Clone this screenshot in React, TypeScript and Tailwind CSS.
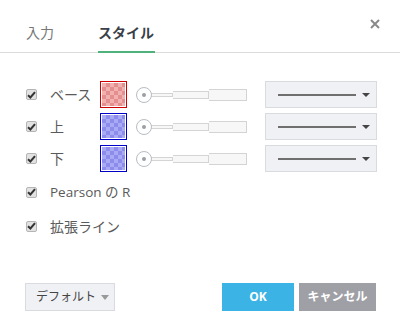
import { useState } from "react";

const font = { fontFamily: '"Open Sans", "Noto Sans CJK JP", sans-serif' };

function Check() {
    return (
        <span className="flex items-center justify-center w-[11px] h-[11px] bg-[#e2e2e2] border border-[#b5b5b5] rounded-[2px]">
            <svg width="9" height="8" viewBox="0 0 9 8">
                <path d="M1 4.2 L3.4 6.5 L8 1.2" stroke="#333" strokeWidth="2" fill="none" />
            </svg>
        </span>
    );
}

function Swatch({ color }: { color: "red" | "blue" }) {
    return color == "red" ? (
        <div className="w-[27px] h-[27px] border border-[#d10000] p-[1px] bg-white">
            <div className="w-full h-full bg-[repeating-conic-gradient(#e58e8e_0_25%,#f2b1b1_0_50%)] bg-[length:8px_8px]" />
        </div>
    ) : (
        <div className="w-[27px] h-[27px] border border-[#0000c8] p-[1px] bg-white">
            <div className="w-full h-full bg-[repeating-conic-gradient(#8c8cec_0_25%,#a9a9f4_0_50%)] bg-[length:8px_8px]" />
        </div>
    );
}

function WidthSlider() {
    return (
        <div className="flex items-center">
            <div className="w-[16px] h-[16px] rounded-full border border-[#b8bcc4] bg-white flex items-center justify-center z-10">
                <div className="w-[4px] h-[4px] rounded-full bg-[#9aa0a8]" />
            </div>
            <div className="w-[22px] h-[4px] border border-[#d4d4d4] border-l-0 bg-[#f7f7f7] -ml-[1px]" />
            <div className="w-[36px] h-[8px] border border-[#d4d4d4] border-l-0 bg-[#f7f7f7]" />
            <div className="w-[38px] h-[12px] border border-[#d4d4d4] border-l-0 bg-[#f7f7f7]" />
        </div>
    );
}

function LineSelect() {
    return (
        <div className="w-[112px] h-[27px] bg-[#f0f1f5] border border-[#d9dbe0] flex items-center pl-[12px] pr-[6px]">
            <div className="w-[78px] h-[2px] bg-[#6f6f6f]" />
            <span className="ml-auto w-0 h-0 border-x-[4px] border-x-transparent border-t-[4px] border-t-[#444]" />
        </div>
    );
}

const lineRows = [
    { label: "ベース", color: "red" as const },
    { label: "上", color: "blue" as const },
    { label: "下", color: "blue" as const },
];

export default function App() {
    const [tab, setTab] = useState("style");

    return (
        <div className="w-[400px] h-[336px] bg-white text-[#444] relative" style={font}>
            {/* tab header */}
            <div className="flex items-start h-[53px] border-b border-[#dcdcdc] pl-[26px] relative">
                <button
                    onClick={() => setTab("input")}
                    className={`h-[53px] shrink-0 whitespace-nowrap pt-[15px] text-[14px] leading-[20px] text-left border-b-2 ${tab == "input" ? "text-[#3a3f4a] font-bold border-[#4fb27d]" : "text-[#777] border-transparent"}`}
                >
                    入力
                </button>
                <button
                    onClick={() => setTab("style")}
                    className={`ml-[44px] w-[57px] h-[53px] shrink-0 whitespace-nowrap pt-[15px] text-[14px] leading-[20px] text-left border-b-2 ${tab == "style" ? "text-[#3a3f4a] font-bold border-[#4fb27d]" : "text-[#777] border-transparent"}`}
                >
                    スタイル
                </button>
                <svg className="absolute left-[370px] top-[19px]" width="10" height="10" viewBox="0 0 10 10">
                    <path d="M1 1 L9 9 M9 1 L1 9" stroke="#8a8a8a" strokeWidth="2" />
                </svg>
            </div>

            <div className="flex flex-col pt-[28px] pl-[26px]">
                {lineRows.map((row, i) => (
                    <div key={i} className="flex items-center h-[27px] mb-[5px]">
                        <Check />
                        <span className="ml-[13px] w-[50px] text-[14px] text-[#5a5a5a] whitespace-nowrap">{row.label}</span>
                        <Swatch color={row.color} />
                        <div className="ml-[9px]">
                            <WidthSlider />
                        </div>
                        <div className="ml-[18px]">
                            <LineSelect />
                        </div>
                    </div>
                ))}
                <div className="flex items-center h-[20px] mt-[5px]">
                    <Check />
                    <span className="ml-[13px] text-[13.5px] text-[#5a5a5a] whitespace-nowrap">Pearson の R</span>
                </div>
                <div className="flex items-center h-[20px] mt-[14px]">
                    <Check />
                    <span className="ml-[13px] text-[14px] text-[#5a5a5a] whitespace-nowrap">拡張ライン</span>
                </div>
            </div>

            {/* footer buttons */}
            <div className="absolute left-[25px] right-[24px] top-[283px] flex">
                <button className="w-[90px] h-[28px] bg-[#f0f1f5] border border-[#d9dbe0] flex items-center pl-[10px] text-[12px] text-[#444] whitespace-nowrap">
                    デフォルト
                    <span className="ml-[5px] w-0 h-0 border-x-[4px] border-x-transparent border-t-[5px] border-t-[#999]" />
                </button>
                <button className="ml-auto w-[72px] h-[28px] bg-[#3bb4e5] text-white text-[12px] font-bold">OK</button>
                <button className="ml-[5px] w-[77px] h-[28px] bg-[#9fa0a6] text-white text-[12px] font-bold whitespace-nowrap">キャンセル</button>
            </div>
        </div>
    );
}
